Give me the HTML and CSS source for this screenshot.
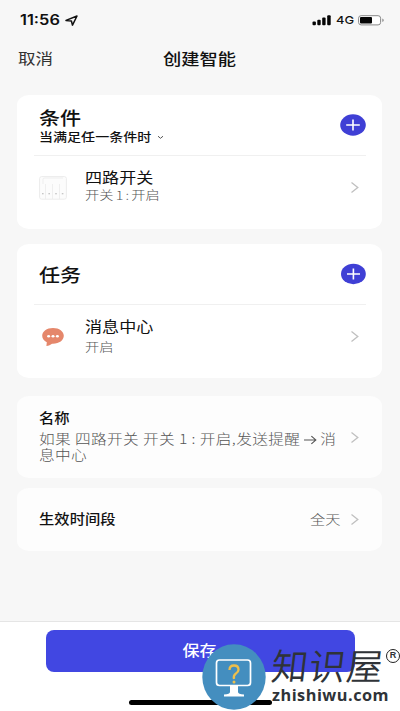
FILE: index.html
```html
<!DOCTYPE html>
<html lang="zh-CN">
<head>
<meta charset="utf-8">
<meta name="viewport" content="width=device-width">
<title>创建智能</title>
<link rel="stylesheet" href="styles.css">
</head>
<body>
<div class="phone">
  <div class="status">
    <span class="clock wide">11:56</span>
    <svg class="locate" width="13" height="11" viewBox="0 0 13 11"><path d="M1 5.4 12 1 7.5 10.2 6.4 6Z" fill="none" stroke="#111" stroke-width="1.5" stroke-linejoin="round"/></svg>
    <svg class="signal" width="20" height="11" viewBox="0 0 20 11" fill="#050505"><rect x="0.5" y="6.5" width="3.4" height="3.7" rx="1"/><rect x="5.3" y="4.7" width="3.4" height="5.5" rx="1"/><rect x="10.2" y="2.5" width="3.4" height="7.7" rx="1"/><rect x="15.2" y="0.3" width="3.5" height="9.9" rx="1"/></svg>
    <span class="net wide">4G</span>
    <svg class="battery" width="27" height="11" viewBox="0 0 27 11"><rect x="0.6" y="0.7" width="22" height="9.2" rx="2.5" fill="#fff" stroke="#888" stroke-width="1"/><rect x="2" y="2" width="12" height="6.6" rx="1" fill="#050505"/><path d="M24.2 3.6v3.4q1.7-.4 1.7-1.7t-1.7-1.7Z" fill="#999"/></svg>
  </div>
  <header class="nav">
    <span class="cancel wide">取消</span>
    <h1 class="wide">创建智能</h1>
  </header>

  <main>
    <section class="card group">
      <div class="head">
        <div>
          <h2 class="wide">条件</h2>
          <p class="mode"><span class="wide">当满足任一条件时</span><svg width="7" height="5" viewBox="0 0 7 5"><path d="M1 1.2 3.5 3.3 6 1.2" fill="none" stroke="#555" stroke-width="1"/></svg></p>
        </div>
        <svg class="add" width="26" height="22" viewBox="0 0 26 22"><ellipse cx="13" cy="11" rx="12.8" ry="10.7" fill="#3f3fd5"/><path d="M6.2 11h13.6M13 5.5v11" stroke="#fff" stroke-width="1.6"/></svg>
      </div>
      <div class="item">
        <svg class="pic" width="28" height="24" viewBox="0 0 28 24"><rect x="0.6" y="0.6" width="26.8" height="22.6" rx="2" fill="#fcfcfc" stroke="#ececec"/><path d="M6.5 8v15M13.5 8v15M20.5 8v15M4 8V3q0-1 2-1h18" fill="none" stroke="#ebebeb" stroke-width=".8"/><path d="M3 17.7h1.6M9.4 17.7H11M16.2 17.7h1.6M22.8 17.7h1.6" stroke="#b5b5b5" stroke-width="1.1"/></svg>
        <div class="words"><p class="title wide">四路开关</p><p class="sub wide">开关 1 : 开启</p></div>
        <svg class="chev" width="9" height="13" viewBox="0 0 9 13"><path d="M1.5 1.5 7.8 6.4 1.5 11.4"/></svg>
      </div>
    </section>

    <section class="card group task">
      <div class="head">
        <h2 class="wide">任务</h2>
        <svg class="add" width="26" height="22" viewBox="0 0 26 22"><ellipse cx="13.4" cy="11" rx="12.4" ry="10.2" fill="#3f3fd5"/><path d="M7 11h13M13.4 5.6v10.8" stroke="#fff" stroke-width="1.6"/></svg>
      </div>
      <div class="item">
        <svg class="pic" width="28" height="24" viewBox="0 0 28 24"><path d="M14 3C7.7 3 3.2 6.5 3.2 10.8c0 2.8 1.8 5.1 4.6 6.5L7.4 21c2.3-.3 4.2-1 5.6-2.3 6.8.4 11.8-3.2 11.8-7.9C24.8 6.4 20.3 3 14 3Z" fill="#e5876b"/><g fill="#fff"><ellipse cx="9.6" cy="11.2" rx="1.5" ry="1.3"/><ellipse cx="14" cy="11.2" rx="1.5" ry="1.3"/><ellipse cx="18.4" cy="11.2" rx="1.5" ry="1.3"/></g></svg>
        <div class="words"><p class="title wide">消息中心</p><p class="sub wide">开启</p></div>
        <svg class="chev" width="9" height="13" viewBox="0 0 9 13"><path d="M1.5 1.5 7.8 6.4 1.5 11.4"/></svg>
      </div>
    </section>

    <section class="card name">
      <div class="words"><h3 class="wide">名称</h3><p class="desc wide">如果 四路开关 开关 1 : 开启,发送提醒<svg width="12" height="10" viewBox="0 0 12 10"><path d="M.5 5h10M6.8 1.2 10.6 5 6.8 8.8" fill="none" stroke="#555" stroke-width="1"/></svg>消<br>息中心</p></div>
      <svg class="chev" width="9" height="13" viewBox="0 0 9 13"><path d="M1.5 1.5 7.8 6.4 1.5 11.4"/></svg>
    </section>

    <section class="card period">
      <h3 class="wide">生效时间段</h3>
      <span class="value wide">全天</span>
      <svg class="chev" width="9" height="13" viewBox="0 0 9 13"><path d="M1.5 1.5 7.8 6.4 1.5 11.4"/></svg>
    </section>
  </main>

  <footer>
    <button class="save"><span class="wide">保存</span></button>
    <div class="homebar"></div>
  </footer>

  <div class="mark">
    <svg class="badge" width="64" height="66" viewBox="0 0 64 66"><ellipse cx="32" cy="33" rx="31.7" ry="32.7" fill="#448ebf"/><rect x="14.5" y="16" width="34" height="25.5" rx="3" fill="none" stroke="#fff" stroke-width="1.7"/><path d="M28 42h8v6q0 2 6 2.5v2H22v-2q6-.5 6-2.5Z" fill="#fff"/><path d="M27.5 26q0-4.5 4.5-4.5t4.5 4.2q0 2-2.7 4T32 35" fill="none" stroke="#eebf4b" stroke-width="2.3"/><circle cx="32" cy="38" r="1.5" fill="#eebf4b"/></svg>
    <div class="brand"><span class="cn">知识屋</span><span class="url">zhishiwu.com</span></div>
    <span class="reg">R</span>
  </div>
</div>
</body>
</html>
```

FILE: styles.css
```css
* { box-sizing: border-box; }
body, h1, h2, h3, p { margin: 0; }
body { font-family: "Noto Sans CJK SC", sans-serif; color: #111; background: #f7f7f7; }
svg { display: block; flex: none; }

.phone { position: relative; width: 400px; height: 711px; overflow: hidden; display: flex; flex-direction: column; }

/* Lettering is wider than tall throughout */
.wide { display: inline-block; transform: scaleX(1.17); transform-origin: left center; white-space: nowrap; }

.status { height: 40px; padding: 0 15px 0 20px; display: flex; align-items: center; font-family: Inter, sans-serif; }
.clock { width: 45px; font-size: 14px; font-weight: 600; line-height: 16px; }
.signal { margin-left: auto; }
.net { width: 18px; margin: 0 4px 0 4px; font-size: 11px; font-weight: 500; line-height: 16px; }

.nav { height: 55px; padding: 8px 18px 0; display: grid; grid-template-columns: 145px 1fr; align-items: start; }
.cancel { font-size: 15px; line-height: 20px; color: #333; font-weight: 400; }
h1 { font-size: 15.6px; line-height: 20px; font-weight: 500; }

main { flex: 1; padding: 0 18px 0 17px; display: flex; flex-direction: column; }
.card { background: #fff; border-radius: 12px / 10px; padding: 0 16px 0 22px; }
.group { height: 134px; margin-bottom: 15px; }
.head { height: 61px; margin-left: -5px; padding-left: 5px; border-bottom: 1px solid #f0f0f0; display: flex; align-items: center; justify-content: space-between; }
h2 { font-size: 18px; line-height: 20px; font-weight: 500; display: block; }
.mode { display: flex; align-items: center; gap: 22px; font-size: 12px; line-height: 14px; font-weight: 500; }
.item { height: 63px; display: flex; align-items: center; }
.words { flex: 1; }
.item .words { margin-left: 18px; padding-bottom: 4px; }
.title { display: block; font-size: 14.6px; line-height: 19px; }
.sub { display: block; font-size: 12.2px; line-height: 18px; color: #555; font-weight: 300; word-spacing: -0.8px; }
.chev { margin-right: 7px; }
.chev path { fill: none; stroke: #c0c0c0; stroke-width: 1.3; }
.task { margin-bottom: 18px; }
.task .words { padding-bottom: 0; }
.task .title { line-height: 20px; }
.task .sub { line-height: 22px; }

.name, .period { background: #fdfdfd; display: flex; align-items: center; }
.name { height: 82px; margin-bottom: 10px; }
.name .words { padding-bottom: 8px; }
.period { height: 63px; }
h3 { font-size: 13.1px; line-height: 18px; font-weight: 500; display: block; }
.desc { display: block; margin-top: 3.5px; font-size: 13.4px; line-height: 15.4px; color: #555; font-weight: 300; letter-spacing: 0.33px; }
.desc svg { display: inline-block; margin: 0 2px 0 3px; vertical-align: -1px; }
.period h3 { flex: 1; padding-bottom: 2px; }
.value { width: 40px; padding-bottom: 2px; font-size: 13px; line-height: 18px; color: #555; font-weight: 300; }

footer { height: 90px; border-top: 1px solid #e5e5e5; background: #fff; padding-top: 7.5px; display: flex; flex-direction: column; align-items: center; }
.save { width: 309px; height: 42px; padding: 0 0 2px; border: 0; border-radius: 8px; background: #4147e2; color: #fff; font: 500 14.6px/20px "Noto Sans CJK SC", sans-serif; }
.save .wide { transform-origin: center; }
.homebar { width: 143px; height: 5px; margin-top: 28px; border-radius: 3px; background: #000; }

.mark { position: absolute; left: 202px; top: 644px; width: 198px; height: 67px; display: flex; color: #2f3338; }
.brand { margin: 0 0 0 6px; width: 113px; display: flex; flex-direction: column; }
.cn { font-size: 36.5px; font-weight: 350; line-height: 41px; letter-spacing: 1px; transform: skewX(-7deg); white-space: nowrap; }
.url { font: 700 16.3px/21px "Open Sans", sans-serif; letter-spacing: 0.5px; }
.reg { position: absolute; right: 0; top: 5px; width: 14px; height: 14px; border: 1.5px solid #222; border-radius: 50%; font: 700 9px/11px "Liberation Sans", sans-serif; text-align: center; }
```
